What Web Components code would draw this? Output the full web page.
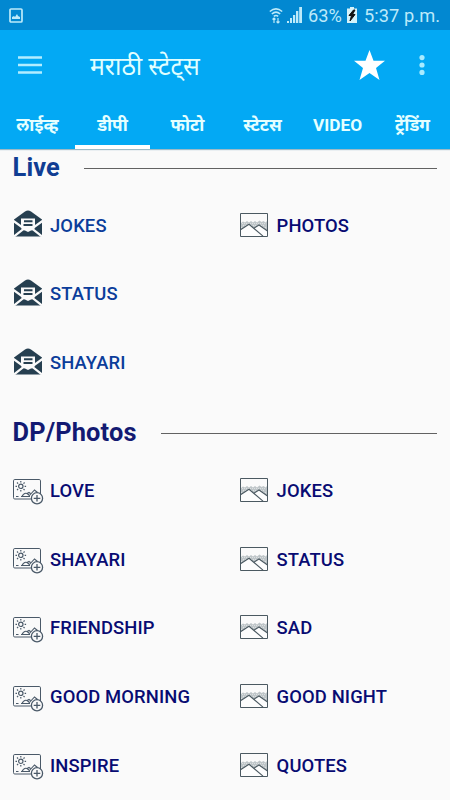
<!DOCTYPE html>
<html lang="mr"><head><meta charset="utf-8"><title>मराठी स्टेट्स</title>
<style>html,body{margin:0;width:450px;height:800px;overflow:hidden;background:#fafafa;font-family:Roboto,"Noto Sans","Noto Sans Devanagari",sans-serif}</style></head>
<body><status-app></status-app>
<script>
const define=(name,html,after)=>{
  const t=document.createElement('template');t.innerHTML=html;
  customElements.define(name,class extends HTMLElement{
    connectedCallback(){
      if(this.shadowRoot)return;
      this.attachShadow({mode:'open'}).append(t.content.cloneNode(true));
      if(after)after(this,this.shadowRoot);
    }
  });
};
const icons={
mail:`<svg width="28" height="27" viewBox="0 0 28 27"><path d="M0 9.500 11 1.500q3-2.200 6 0l11 8V25q0 1.500-1.500 1.500h-25Q0 26.500 0 25z" fill="#263f50"/><path d="M-.5 11 10 18.500 0 26.500M28.500 11 18 18.500 28 26.500" fill="none" stroke="#fafafa" stroke-width="2.200"/><path d="M7 8.500h14v9q-1 3-4 3l-3 1.500-3-1.500q-3 0-4-3z" fill="#fafafa"/><path d="M10 11.300h8.500M9.500 15h9" stroke="#263f50" stroke-width="2"/></svg>`,
add:`<svg width="31" height="27" viewBox="0 0 31 27" fill="none" stroke="#4a5968"><rect x=".5" y="1.500" width="27" height="19.500" rx="1.300"/><circle cx="7.800" cy="8.300" r="2.200" stroke-width="1.200"/><path d="M7.800 3v1.500M7.800 12.100v1.500M2.500 8.300H4M11.600 8.300h1.500M4 4.500l1.100 1.100M10.500 11l1.100 1.100M4 12.100 5.100 11M10.500 5.600l1.100-1.100" stroke-width="1.200"/><path d="M9 18.500q2-4.200 5-3l2 1.500M14 15.500l2-1 1.500 1M15.500 18.500 21.500 12l3 2.500M3 18.500h2.500M8 18.500h9" stroke-width="1.100"/><circle cx="24" cy="20.300" r="5.600" fill="#fafafa" stroke-width="1.300"/><path d="M24 17v6.600M20.700 20.300h6.600" stroke-width="1.300"/></svg>`,
photo:`<svg width="28" height="24" viewBox="0 0 28 24"><path d="M1 10 3 8.500l2 1L7 8l2 1.500 2-1.500 2 1.500L15 8l2 1.500L19.500 7.500l2 1.500 2-1 2 1.500L27 8v11H1z" fill="#bec5c8"/><path d="M2 10.500h24M3 12.500h22M1 14.500h26" stroke="#dce0e1" stroke-dasharray="1 1"/><path d="M1 16.500 9 11l4.500 4.500L19 12l8 5.500V23H1z" fill="#fdfdfd"/><path d="M.5 16.800 9 11.300l5 4.200 9 7.700M13.500 15.500 19 12l8.500 6" fill="none" stroke="#4b5961" stroke-width="1.100"/><path d="M.5.5h27v23H.5z" fill="none" stroke="#4b5961"/></svg>`
};
define('app-status',`<style>:host{display:flex;box-sizing:border-box;height:30px;background:#0288d1;color:#bdeafa;align-items:center;padding:0 9px 0 9px;font-size:18.200px}svg{display:block}.picture{margin-right:auto}.wifi{margin-right:4px}.signal{margin-right:6px}.battery{margin:0 7px 0 4px}.pct{width:35px}.time{width:77px;white-space:nowrap;letter-spacing:.08px}</style>
<svg class="picture" width="14" height="15" viewBox="0 0 14 15"><rect x="1" y="1" width="12" height="13" rx="1" fill="none" stroke="currentColor" stroke-width="1.700"/><path d="M3 11V9l2-1 1 1 2-3 1 2 2 1v2z" fill="currentColor"/></svg>
<svg class="wifi" width="14" height="17" viewBox="0 0 14 17" fill="none" stroke="currentColor" stroke-width="1.500"><path d="M.8 4.500Q7-.8 13.200 4.500M2.800 7Q7 3.300 11.200 7M4.800 9.300Q7 7.500 9.200 9.300"/><path d="M5 16v-5M9 11v5M3.500 12.500 5 11l1.500 1.500M7.500 14.500 9 16l1.500-1.500" stroke-width="1.200"/></svg>
<svg class="signal" width="15" height="16" viewBox="0 0 15 16" fill="currentColor"><path d="M0 14h2v2H0zM3 11h2v5H3zM6 8h2.200v8H6zM9 4h2.300v12H9zM12.200 0H15v16h-2.800z"/></svg>
<span class="pct">63%</span><svg class="battery" width="10" height="16" viewBox="0 0 10 16"><path d="M3 0h4v1.500h3V16H0V1.500h3z" fill="#d5f2fa"/><path d="M6.500 3 2 8.500h2.500L3 14l5-6.500H5.500L8 3z" fill="#111" stroke="#111"/></svg><span class="time">5:37 p.m.</span>`);
define('app-toolbar',`<style>:host{display:flex;box-sizing:border-box;height:72px;background:#03a9f4;align-items:center;padding:0 25px 0 18px;color:#e1ffff}.title{font-size:24.800px;line-height:36px;margin:0 auto 0 48px;white-space:nowrap;padding-top:1px}.star{margin-right:34px;margin-top:-2px}svg{display:block;flex:none}.more{margin-top:-2px}.menu{margin-top:-2px}</style>
<svg class="menu" width="24" height="18" viewBox="0 0 24 18"><path d="M0 1.500h24M0 9h24M0 16.500h24" stroke="#b3edff" stroke-width="2.300"/></svg>
<span class="title"><slot></slot></span>
<svg class="star" width="31" height="30" viewBox="0 0 31 30"><path fill="#fff" d="m15.500 0 4 10.800H31l-9 7.200 3.500 12-10-7-10 7L9 18 0 10.800h11.500z"/></svg>
<svg class="more" width="6" height="20" viewBox="0 0 6 20" fill="#a8ebff"><circle cx="3" cy="2.600" r="2.600"/><circle cx="3" cy="10" r="2.600"/><circle cx="3" cy="17.400" r="2.600"/></svg>`);
define('app-tab',`<style>:host{display:flex;box-sizing:border-box;height:47px;align-items:center;justify-content:center;font-weight:700;font-size:17.300px;line-height:26px;color:#e5ffff;white-space:nowrap;border-bottom:4px solid transparent;padding-top:3px}:host([active]){border-color:#fff}</style><slot></slot>`);
define('app-tabs',`<style>:host{display:grid;grid-template-columns:repeat(6,75px);background:#03a9f4;box-shadow:0 1px 1px #9dbac6;position:relative}</style><slot></slot>`);
define('section-heading',`<style>:host{display:flex;align-items:center;height:30px;padding:0 13px 0 12.500px;font-size:25.400px;line-height:30px;font-weight:700;color:var(--ink,#131a72)}span{width:var(--title-width);white-space:nowrap;letter-spacing:.15px}i{height:1px;background:#626262;flex:1;margin-top:2px}</style><span><slot></slot></span><i></i>`);
define('category-item',`<style>:host{display:flex;height:28px;align-items:center;color:var(--ink,#080b72);font-size:18.400px;font-weight:500;white-space:nowrap}.icon{width:36.500px;height:28px;display:flex;align-items:center}svg{display:block}:host([icon=mail]) svg{margin-top:-3px}:host([icon=add]) svg{margin:3px 0 0 -1px}:host([icon=photo]) svg{margin-top:-1px}:host([icon=photo]) .label{padding-left:.6px}.label{letter-spacing:.12px}</style><span class="icon"></span><span class="label"><slot></slot></span>`,(el,r)=>{r.querySelector('.icon').innerHTML=icons[el.getAttribute('icon')]});
define('category-grid',`<style>:host{display:grid;grid-template-columns:226px 1fr;grid-auto-rows:28px;row-gap:40.750px;padding-left:13.500px}</style><slot></slot>`);
define('status-app',`<style>:host{display:block;width:450px;height:800px;overflow:hidden;background:#fafafa}main{display:block;padding-top:3px}.live{padding-top:29px;--ink:#0b3d9a}.photos-grid{padding-top:29.250px}.dp{margin-top:40.500px}.live-heading{--ink:#103d93;--title-width:71.500px}.dp{--title-width:148.500px}.photo{--ink:#080b72;grid-column:2}.left{grid-column:1}</style>
<app-status></app-status><app-toolbar>मराठी स्टेट्स</app-toolbar>
<app-tabs><app-tab>लाईव्ह</app-tab><app-tab active>डीपी</app-tab><app-tab>फोटो</app-tab><app-tab>स्टेटस</app-tab><app-tab>VIDEO</app-tab><app-tab>ट्रेंडिंग</app-tab></app-tabs>
<main><section-heading class="live-heading">Live</section-heading>
<category-grid class="live"><category-item icon="mail">JOKES</category-item><category-item class="photo" icon="photo">PHOTOS</category-item><category-item class="left" icon="mail">STATUS</category-item><category-item class="left" icon="mail">SHAYARI</category-item></category-grid>
<section-heading class="dp">DP/Photos</section-heading>
<category-grid class="photos-grid"><category-item icon="add">LOVE</category-item><category-item icon="photo">JOKES</category-item><category-item icon="add">SHAYARI</category-item><category-item icon="photo">STATUS</category-item><category-item icon="add">FRIENDSHIP</category-item><category-item icon="photo">SAD</category-item><category-item icon="add">GOOD MORNING</category-item><category-item icon="photo">GOOD NIGHT</category-item><category-item icon="add">INSPIRE</category-item><category-item icon="photo">QUOTES</category-item></category-grid></main>`);
</script></body></html>
